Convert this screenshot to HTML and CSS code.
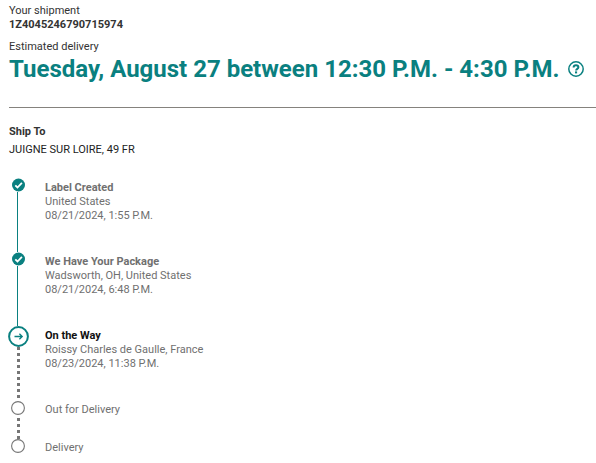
FILE: index.html
```html
<!DOCTYPE html>
<html lang="en-us">
  <head>
    <meta charset="utf-8" />
    <title>Shipment tracking</title>
    <link rel="stylesheet" href="styles.css">
  </head>
  <body>
    <header class="summary">
      <p>Your shipment</p>
      <p class="tracking-number">1Z4045246790715974</p>
      <p class="estimate-label">Estimated delivery</p>
      <div class="estimate">
        <h1>Tuesday, August 27 between 12:30 P.M. - 4:30 P.M.</h1>
        <button type="button" class="help" aria-label="About this estimate">
          <svg width="16" height="16" viewBox="0 0 16 16" fill="none" stroke="currentColor">
            <circle cx="8" cy="8" r="7.2" stroke-width="1.5" />
            <path d="M5.6 6.6C5.6 5 6.6 4.2 8 4.2s2.4.8 2.4 2.1c0 1.6-2.3 1.6-2.3 3.3" stroke-width="2" />
            <path d="M7 11.4h2.1" stroke-width="2" />
          </svg>
        </button>
      </div>
    </header>

    <section class="ship-to">
      <h2>Ship To</h2>
      <p>JUIGNE SUR LOIRE, 49 FR</p>
    </section>

    <ol class="steps">
      <li class="step done">
        <div class="marker">
          <svg width="14" height="14" viewBox="0 0 14 14">
            <circle cx="7.5" cy="7" r="6.5" fill="#0a8080" />
            <path d="M4.3 7.3l2.2 2.2 4.4-4.6" fill="none" stroke="#fff" stroke-width="1.8" />
          </svg>
        </div>
        <div class="detail">
          <h3>Label Created</h3>
          <p>United States</p>
          <p>08/21/2024, 1:55 P.M.</p>
        </div>
      </li>
      <li class="step done">
        <div class="marker">
          <svg width="14" height="14" viewBox="0 0 14 14">
            <circle cx="7.5" cy="7" r="6.5" fill="#0a8080" />
            <path d="M4.3 7.3l2.2 2.2 4.4-4.6" fill="none" stroke="#fff" stroke-width="1.8" />
          </svg>
        </div>
        <div class="detail">
          <h3>We Have Your Package</h3>
          <p>Wadsworth, OH, United States</p>
          <p>08/21/2024, 6:48 P.M.</p>
        </div>
      </li>
      <li class="step current">
        <div class="marker">
          <svg width="22" height="21" viewBox="0 0 22 21" fill="none" stroke="#0a8080">
            <circle cx="11.5" cy="10.5" r="9.4" stroke-width="2" />
            <path d="M7.5 10.5h7.6M12.4 7.8l2.8 2.7-2.8 2.7" stroke-width="1.3" />
          </svg>
        </div>
        <div class="detail">
          <h3>On the Way</h3>
          <p>Roissy Charles de Gaulle, France</p>
          <p>08/23/2024, 11:38 P.M.</p>
        </div>
      </li>
      <li class="step pending">
        <div class="marker">
          <svg width="14" height="14" viewBox="0 0 14 14">
            <circle cx="7" cy="7" r="6.4" fill="none" stroke="#767676" stroke-width="1.1" />
          </svg>
        </div>
        <div class="detail">
          <h3>Out for Delivery</h3>
        </div>
      </li>
      <li class="step pending">
        <div class="marker">
          <svg width="14" height="14" viewBox="0 0 14 14">
            <circle cx="7" cy="7" r="6.4" fill="none" stroke="#767676" stroke-width="1.1" />
          </svg>
        </div>
        <div class="detail">
          <h3>Delivery</h3>
        </div>
      </li>
    </ol>
  </body>
</html>
```
FILE: styles.css
```css
body {
  margin: 0;
  padding: 4px 0 8px;
  font-family: Roboto, Arial, sans-serif;
  font-size: 11px;
  line-height: 14px;
  color: #333;
  background-color: #fff;
}

h1,
h2,
h3,
p {
  margin: 0;
  font-size: 11px;
}

.summary {
  margin-left: 9px;
  padding-bottom: 23px;
  border-bottom: 1px solid #85827d;
}
.tracking-number {
  font-weight: 700;
}
.estimate-label {
  margin-top: 8px;
}
.estimate {
  display: flex;
  align-items: center;
  gap: 9px;
}
.estimate h1 {
  font-size: 24px;
  line-height: 30px;
  color: #0a8080;
}
.help {
  display: flex;
  flex: none;
  padding: 0;
  border: 0;
  background: none;
  color: #0a8080;
  cursor: pointer;
}

.ship-to {
  padding: 17px 9px 0;
}
.ship-to p {
  margin-top: 4px;
  color: #222;
}

.steps {
  margin: 21px 0 0;
  padding: 0 8px;
  list-style: none;
  color: #707070;
}
.step {
  display: flex;
  gap: 17px;
}
.marker {
  display: flex;
  flex: none;
  flex-direction: column;
  align-items: center;
  width: 20px;
}
.marker svg {
  flex: none;
}
.detail {
  padding: 3px 0 29px;
}

/* line down to the next step */
.done .marker::after {
  content: "";
  flex: 1;
  width: 1px;
  margin-right: 1px;
  background-color: #0a8080;
}
.current .marker::after,
.pending:not(:last-child) .marker::after {
  content: "";
  flex: 1;
  width: 3px;
  margin-left: 1px;
  background: repeating-linear-gradient(#767676 0 3px, transparent 3px 6px);
}
.pending:not(:last-child) .marker::after {
  margin-top: 3px;
}

.current h3 {
  color: #111;
}
.current .detail {
  padding-bottom: 30px;
}
.pending h3 {
  font-weight: 400;
}
.pending .detail {
  padding: 2px 0 22px;
}
.pending:last-child .detail {
  padding-bottom: 0;
}
```
